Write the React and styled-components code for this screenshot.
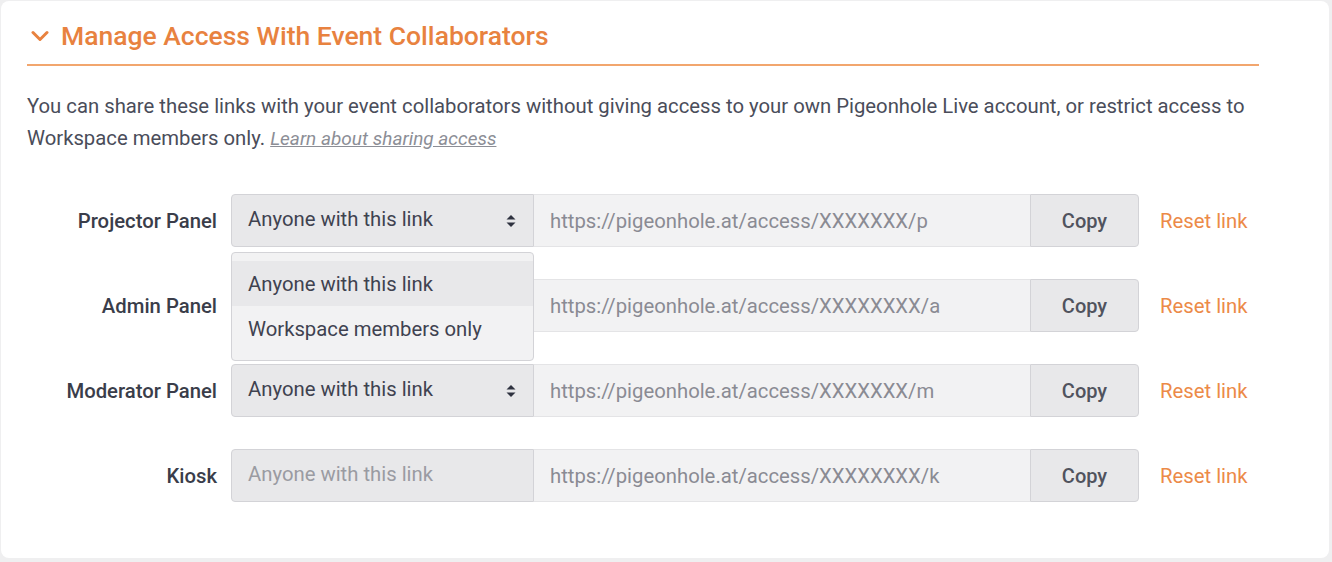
import React from 'react';
import styled, { createGlobalStyle } from 'styled-components';

const GlobalStyle = createGlobalStyle`
  html, body {
    margin: 0;
    padding: 0;
    background: #efeff0;
    font-family: Roboto, 'Liberation Sans', sans-serif;
  }
`;

const rows = [
  { label: 'Projector Panel', url: 'https://pigeonhole.at/access/XXXXXXX/p', open: true },
  { label: 'Admin Panel', url: 'https://pigeonhole.at/access/XXXXXXXX/a', hidden: true },
  { label: 'Moderator Panel', url: 'https://pigeonhole.at/access/XXXXXXX/m' },
  { label: 'Kiosk', url: 'https://pigeonhole.at/access/XXXXXXXX/k', disabled: true },
];

const Arrows = () => (
  <svg width='10' height='14' viewBox='0 0 10 14'>
    <path d='M5 1 L9.5 5.5 H0.5 Z' fill='#2f3240' />
    <path d='M5 13 L9.5 8.5 H0.5 Z' fill='#2f3240' />
  </svg>
);

const Chevron = () => (
  <svg width='18' height='12' viewBox='0 0 18 12'>
    <polyline points='2,2.5 9,9.5 16,2.5' fill='none' stroke='#e8823f' strokeWidth='3' strokeLinecap='round' strokeLinejoin='round' />
  </svg>
);

const App = () => {
  return (
    <>
      <GlobalStyle />
      <Card>
        <Header>
          <Chevron />
          <Title>Manage Access With Event Collaborators</Title>
        </Header>
        <Intro>
          You can share these links with your event collaborators without giving access to your own Pigeonhole Live account, or restrict access to
          Workspace members only. <Learn>Learn about sharing access</Learn>
        </Intro>
        <Rows>
          {rows.map((row) => (
            <Row key={row.label}>
              <Label>{row.label}</Label>
              <Group>
                <SelectWrap>
                  <Select disabled={row.disabled} hidden={row.hidden}>
                    <span>Anyone with this link</span>
                    {!row.disabled && <Arrows />}
                  </Select>
                  {row.open && (
                    <Menu>
                      <Option active>Anyone with this link</Option>
                      <Option>Workspace members only</Option>
                    </Menu>
                  )}
                </SelectWrap>
                <Url>{row.url}</Url>
                <CopyButton>Copy</CopyButton>
              </Group>
              <Reset>Reset link</Reset>
            </Row>
          ))}
        </Rows>
      </Card>
    </>
  );
};

const Card = styled.div`
  margin: 1px 3px 0 1px;
  height: 557px;
  box-sizing: border-box;
  background: #fff;
  border-radius: 8px;
  padding: 17px 0 0 26px;
`;

const Header = styled.div`
  width: 1232px;
  display: flex;
  align-items: center;
  gap: 12px;
  padding: 0 0 10px 4px;
  box-sizing: border-box;
  border-bottom: 2px solid #f2a66e;
`;

const Title = styled.h2`
  margin: 0;
  font-size: 26.5px;
  font-weight: 500;
  line-height: 36px;
  color: #e8823f;
`;

const Intro = styled.p`
  margin: 24px 0 0;
  width: 1250px;
  font-size: 20.3px;
  line-height: 32px;
  color: #4a4d5a;
`;

const Learn = styled.a`
  font-style: italic;
  text-decoration: underline;
  color: #8c8e96;
  font-size: 19px;
  line-height: 24px;
`;

const Rows = styled.div`
  margin-top: 40px;
  display: flex;
  flex-direction: column;
  gap: 32px;
`;

const Row = styled.div`
  display: flex;
  align-items: center;
`;

const Label = styled.div`
  width: 190px;
  margin-right: 14px;
  text-align: right;
  font-size: 20.3px;
  font-weight: 500;
  color: #3a3d4a;
`;

const Group = styled.div`
  display: flex;
  height: 53px;
`;

const SelectWrap = styled.div`
  position: relative;
  width: 303px;
`;

const Select = styled.div`
  height: 53px;
  box-sizing: border-box;
  display: flex;
  align-items: center;
  justify-content: space-between;
  padding: 0 17px 0 16px;
  background: #e8e8ea;
  border: 1px solid #d3d3d7;
  border-radius: 4px 0 0 4px;
  font-size: 20.3px;
  color: ${(p) => (p.disabled ? '#9a9ba2' : '#3f4250')};
  span {
    margin-top: -3px;
  }
  ${(p) => p.hidden && 'visibility: hidden;'}
`;

const Menu = styled.div`
  position: absolute;
  top: 58px;
  left: 0;
  width: 100%;
  box-sizing: border-box;
  padding: 8px 0 9px;
  background: #f2f2f3;
  border: 1px solid #d3d3d7;
  border-radius: 4px;
  z-index: 2;
`;

const Option = styled.div`
  height: 45px;
  display: flex;
  align-items: center;
  padding: 0 16px;
  font-size: 20.3px;
  color: #3f4250;
  background: ${(p) => (p.active ? '#e8e8ea' : '#f2f2f3')};
`;

const Url = styled.div`
  width: 496px;
  box-sizing: border-box;
  display: flex;
  align-items: center;
  padding: 0 16px;
  background: #f2f2f3;
  border: 1px solid #e4e4e6;
  border-left: none;
  border-right: none;
  font-size: 20.3px;
  color: #8a8b93;
`;

const CopyButton = styled.button`
  width: 109px;
  box-sizing: border-box;
  background: #e8e8ea;
  border: 1px solid #d3d3d7;
  border-radius: 0 4px 4px 0;
  font-family: inherit;
  font-size: 20px;
  font-weight: 500;
  color: #50535e;
  cursor: pointer;
`;

const Reset = styled.a`
  margin-left: 21px;
  font-size: 20.3px;
  color: #ec8a48;
  cursor: pointer;
`;

export default App;
